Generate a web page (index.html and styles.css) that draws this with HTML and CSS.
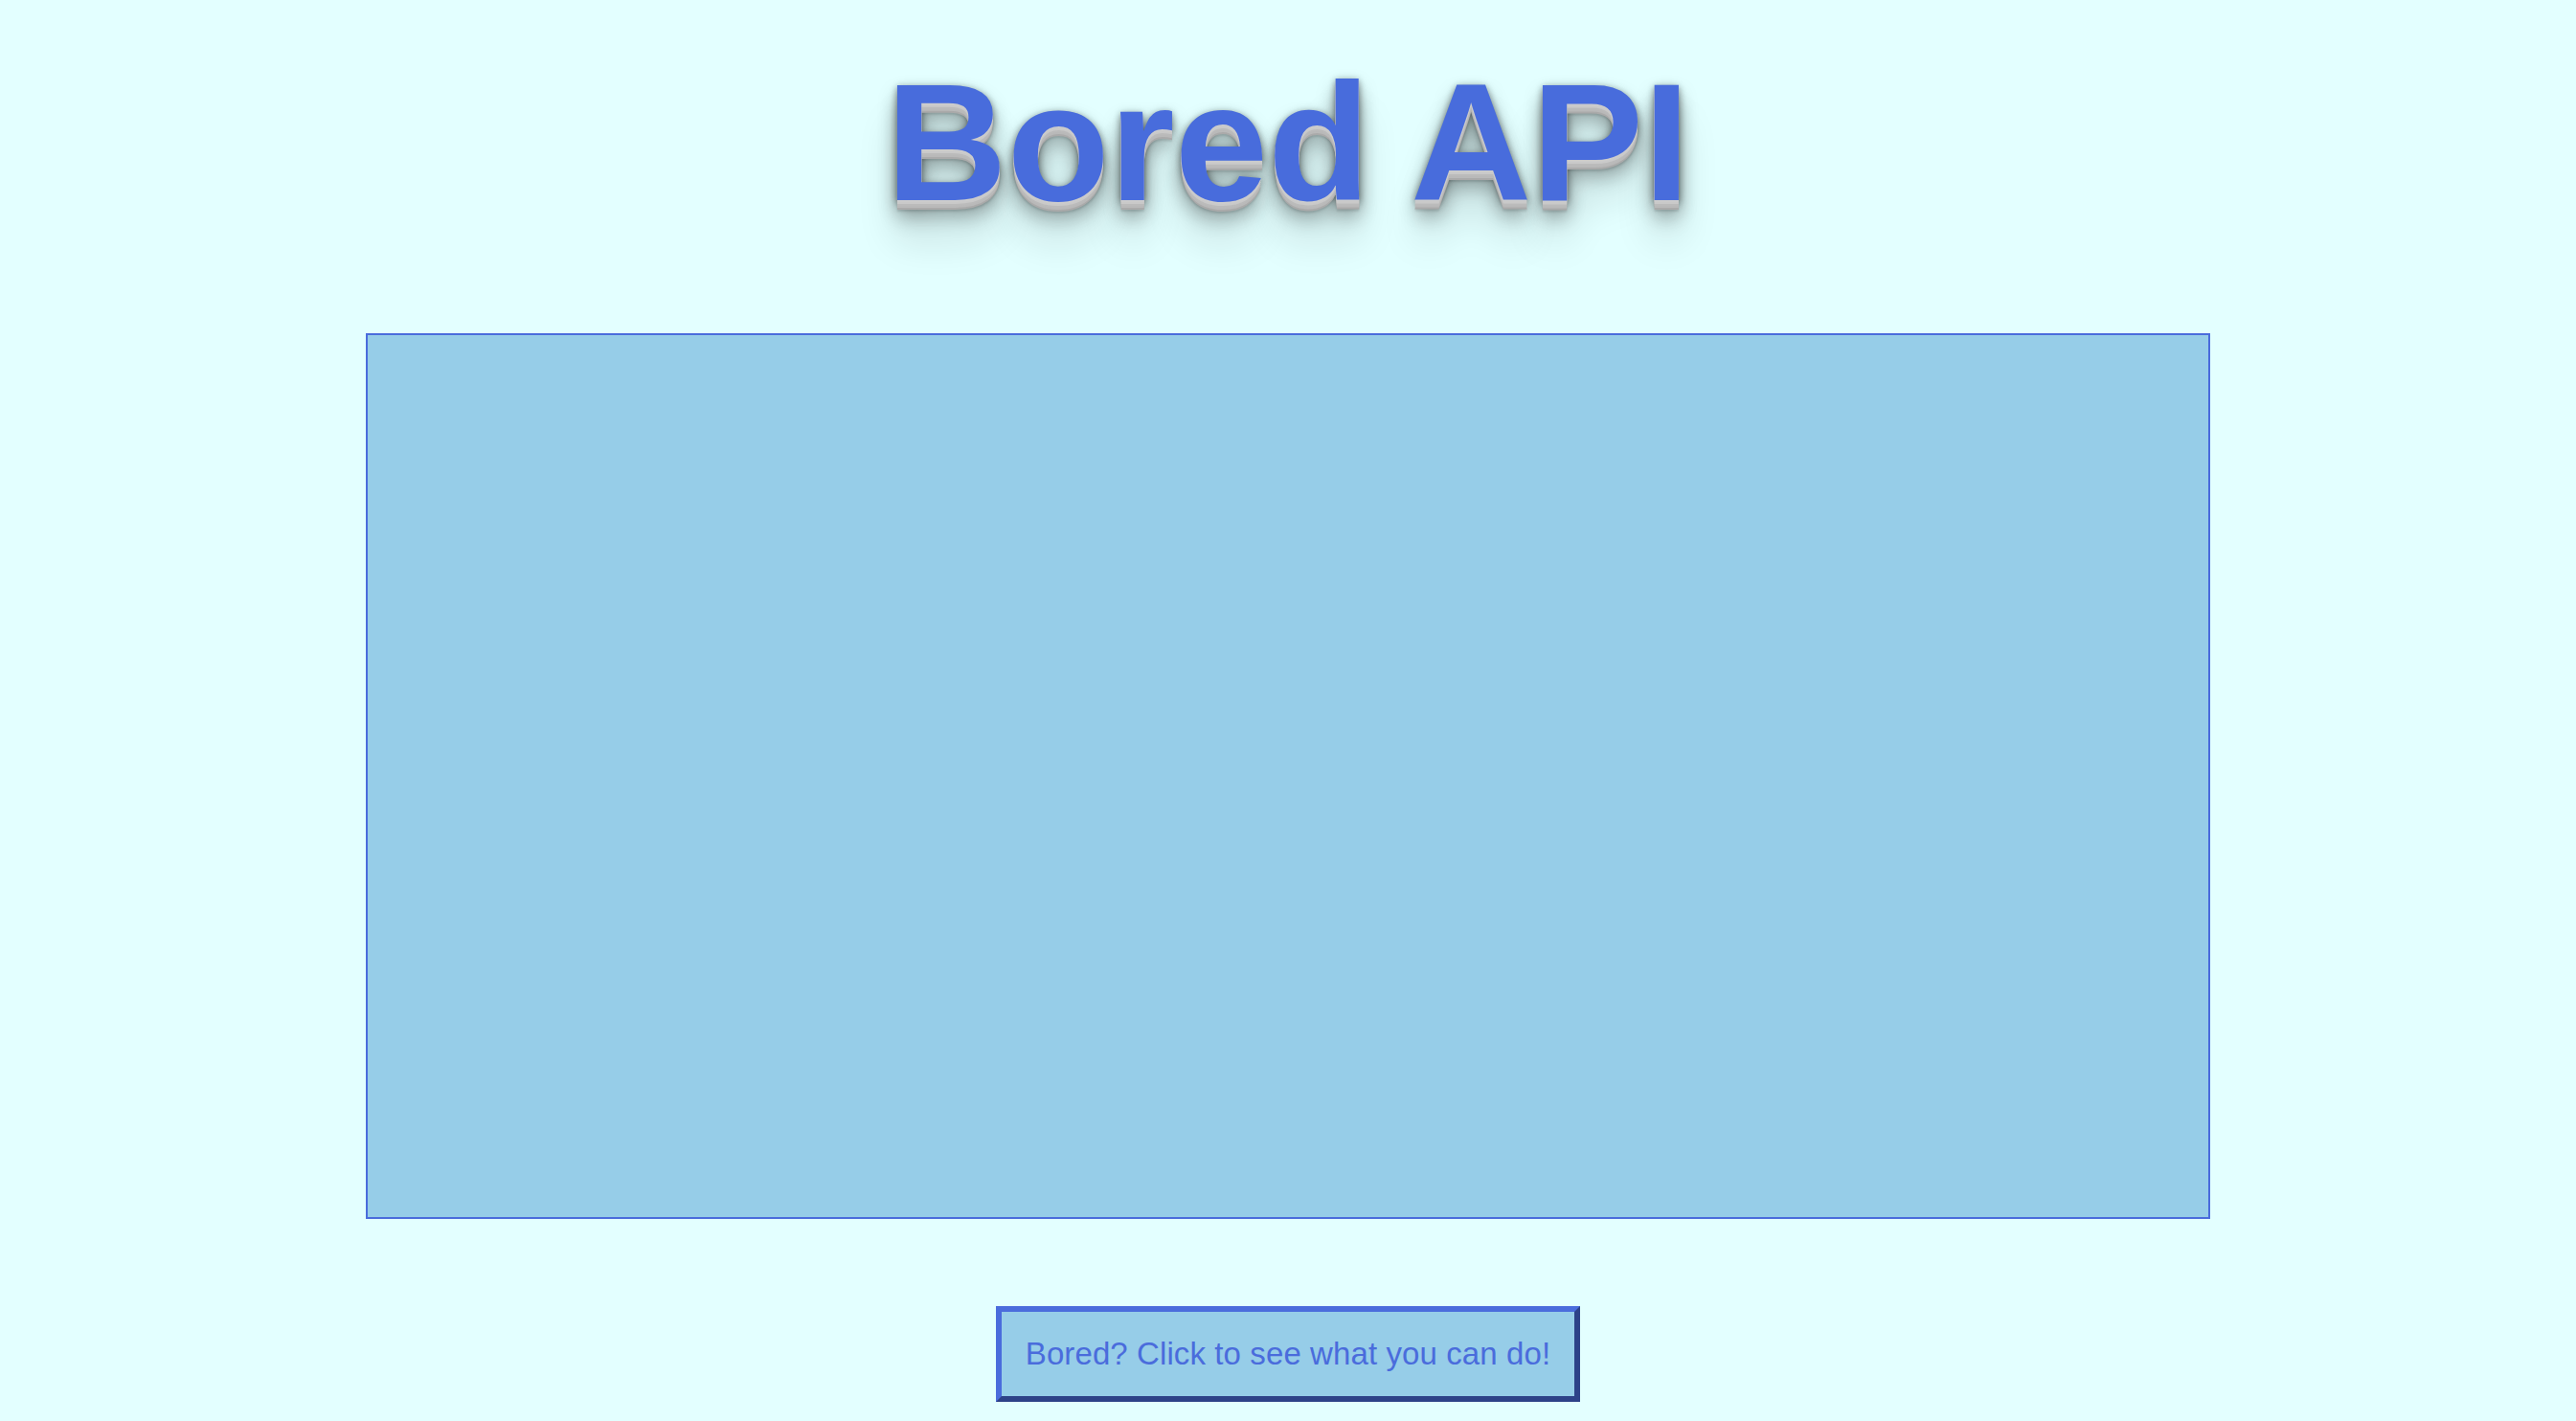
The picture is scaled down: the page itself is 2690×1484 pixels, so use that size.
FILE: index.html
```html
<!DOCTYPE html>
<html lang="en">
<head>
<meta charset="utf-8">
<title>Bored API</title>
<link rel="stylesheet" href="styles.css">
</head>
<body>
<main class="page">
  <h1 class="title">Bored API</h1>
  <section class="panel"></section>
  <button class="cta" type="button">Bored? Click to see what you can do!</button>
</main>
</body>
</html>
```

FILE: styles.css
```css
html, body {
  margin: 0;
  padding: 0;
  background: #e3ffff;
}

.page {
  display: flex;
  flex-direction: column;
  align-items: center;
  font-family: "Liberation Sans", Arial, sans-serif;
}

.title {
  margin: 50px 0 100px;
  font-size: 175px;
  line-height: 198px;
  font-weight: 700;
  color: #486cdc;
  text-shadow:
    0 2px 0 #cccccc,
    0 4px 0 #c9c9c9,
    0 6px 0 #bbbbbb,
    0 8px 0 #b9b9b9,
    0 10px 0 #aaaaaa,
    0 12px 2px rgba(0, 0, 0, 0.1),
    0 0 10px rgba(0, 0, 0, 0.1),
    0 2px 6px rgba(0, 0, 0, 0.3),
    0 6px 10px rgba(0, 0, 0, 0.2),
    0 10px 20px rgba(0, 0, 0, 0.25),
    0 20px 20px rgba(0, 0, 0, 0.2),
    0 40px 40px rgba(0, 0, 0, 0.15);
}

.panel {
  box-sizing: border-box;
  width: 1926px;
  height: 925px;
  background: #96cde8;
  border: 2px solid #4a6cdc;
}

.cta {
  margin-top: 91px;
  box-sizing: border-box;
  width: 610px;
  height: 100px;
  padding: 0;
  background: #96cde8;
  border: 6px outset #4a6cdc;
  color: #4a6cdc;
  font-family: "Liberation Sans", Arial, sans-serif;
  font-size: 33px;
  letter-spacing: 0.1px;
  cursor: pointer;
}
```
